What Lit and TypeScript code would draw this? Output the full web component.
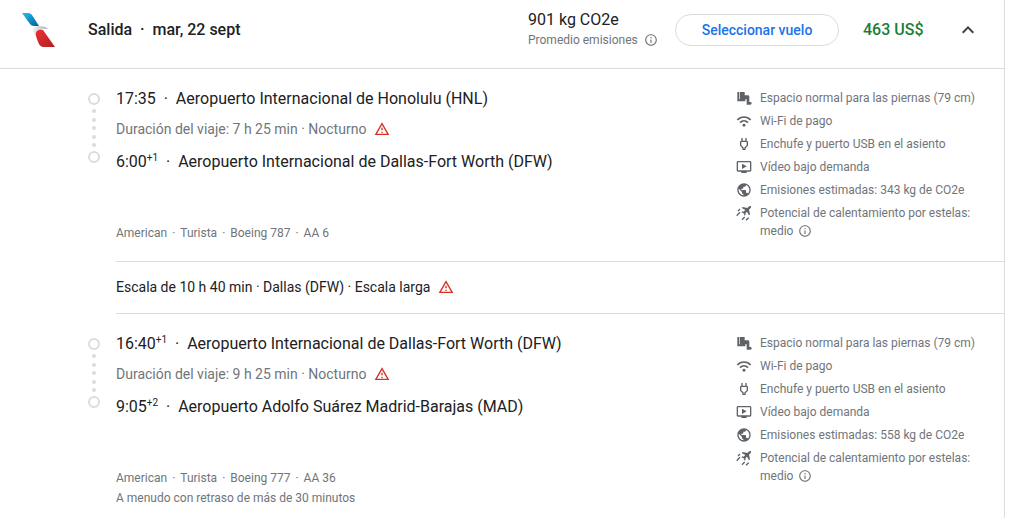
import { LitElement, html, css, svg } from "lit";
import { customElement, property } from "lit/decorators.js";

type IconName = "seat" | "wifi" | "plug" | "video" | "globe" | "contrail" | "info" | "warning" | "collapse";

const glyphs = {
  seat: svg`<path d="M2 3h3v11h9v3H2zM6 3h7v5h5c1.100 0 2 .9 2 2v8h1.500a1.500 1.500 0 0 1 0 4H16v-8H6z"/>`,
  wifi: svg`<g fill="none" stroke="currentColor" stroke-width="2.400"><path d="M2 10.500C7.500 4.500 16.500 4.500 22 10.500M6 14.500c3.500-3.500 8.500-3.500 12 0"/></g><circle cx="12" cy="18.500" r="2.200"/>`,
  plug: svg`<path d="M16 7V3h-2v4h-4V3H8v4c-1.100 0-2 .9-2 2v5.500L9.500 18v3h5v-3l3.500-3.500V9c0-1.100-.9-2-2-2zm0 6.700-3.500 3.500V19h-1v-1.800L8 13.700V9h8z"/>`,
  video: svg`<path d="M21 3H3c-1.100 0-2 .9-2 2v12c0 1.100.9 2 2 2h5v2h8v-2h5c1.100 0 2-.9 2-2V5c0-1.100-.9-2-2-2zm0 14H3V5h18v12zM9 7v8l7-4z"/>`,
  globe: svg`<path d="M12 2C6.480 2 2 6.480 2 12s4.480 10 10 10 10-4.480 10-10S17.520 2 12 2zm-1 17.930c-3.950-.49-7-3.850-7-7.930 0-.62.08-1.210.21-1.790L9 15v1c0 1.100.9 2 2 2v1.930zm6.900-2.540c-.26-.81-1-1.390-1.900-1.390h-1v-3c0-.55-.45-1-1-1H8v-2h2c.55 0 1-.45 1-1V7h2c1.100 0 2-.9 2-2v-.41c2.930 1.190 5 4.060 5 7.410 0 2.080-.8 3.970-2.100 5.390z"/>`,
  contrail: svg`<path d="M22.500 2c-1-1-2.500-.5-3.500.5L17 4.500 10 3 8.500 4.500l5.500 3-2.500 2.500-2-.5L8 11l3.500 1.500L13 16l1.500-1.500-.5-2 2.500-2.500 3 5.500 1.500-1.500-1.500-7 2-2c1-1 1.500-2 1-3z"/><path d="M3 9l3-3M1 16l5-5M9 22l4-4M15 23l4-4" fill="none" stroke="currentColor" stroke-width="2"/>`,
  info: svg`<path d="M11 17h2v-6h-2v6zm1-15C6.480 2 2 6.480 2 12s4.480 10 10 10 10-4.480 10-10S17.520 2 12 2zm0 18c-4.410 0-8-3.590-8-8s3.590-8 8-8 8 3.590 8 8-3.590 8-8 8zM11 9h2V7h-2v2z"/>`,
  warning: svg`<path d="M12 5.990 19.530 19H4.470L12 5.990M12 2 1 21h22L12 2zm1 14h-2v2h2v-2zm0-6h-2v4h2v-4z"/>`,
  collapse: svg`<path d="M12 8l-6 6 1.410 1.410L12 10.830l4.590 4.580L18 14z"/>`,
};

@customElement("flight-icon")
class FlightIcon extends LitElement {
  @property() name: IconName = "info";
  static styles = css`
    :host { display: inline-block; width: 16px; height: 16px; flex: none; }
    .glyph { display: block; width: 100%; height: 100%; fill: currentColor; }
  `;
  render() {
    return html`<svg class="glyph" viewBox="0 0 24 24" aria-hidden="true">${glyphs[this.name]}</svg>`;
  }
}

interface Stop { time: string; days?: string; airport: string; }
interface Leg { from: Stop; to: Stop; duration: string; aircraft: string[]; note?: string; co2: string; }

const legs: Leg[] = [
  {
    from: { time: "17:35", airport: "Aeropuerto Internacional de Honolulu (HNL)" },
    to: { time: "6:00", days: "+1", airport: "Aeropuerto Internacional de Dallas-Fort Worth (DFW)" },
    duration: "7 h 25 min",
    aircraft: ["American", "Turista", "Boeing 787", "AA 6"],
    co2: "343",
  },
  {
    from: { time: "16:40", days: "+1", airport: "Aeropuerto Internacional de Dallas-Fort Worth (DFW)" },
    to: { time: "9:05", days: "+2", airport: "Aeropuerto Adolfo Suárez Madrid-Barajas (MAD)" },
    duration: "9 h 25 min",
    aircraft: ["American", "Turista", "Boeing 777", "AA 36"],
    note: "A menudo con retraso de más de 30 minutos",
    co2: "558",
  },
];

@customElement("flight-leg")
class FlightLeg extends LitElement {
  @property({ attribute: false }) leg!: Leg;
  static styles = css`
    :host {
      display: grid;
      grid-template-columns: 28px minmax(0, 1fr) 268px;
      padding: 18px 0 20px 88px;
      color: #70757a;
      font-size: 12px;
      line-height: 16px;
    }
    .rail { display: flex; flex-direction: column; align-items: center; width: 12px; padding-top: 6px; }
    .ring { box-sizing: border-box; width: 12px; height: 12px; border: 2px solid #dadce0; border-radius: 50%; }
    .dots { display: flex; flex-direction: column; justify-content: space-between; height: 38px; margin: 4px 0; }
    .dot { width: 4px; height: 4px; border-radius: 50%; background: #dadce0; }
    .stop { display: flex; font-family: "Google Sans", Roboto, sans-serif; font-size: 16px; line-height: 24px; color: #202124; white-space: nowrap; }
    .days { font-size: 10px; line-height: 16px; }
    .sep { width: 20px; text-align: center; }
    .duration { display: flex; align-items: center; gap: 8px; margin: 8px 0 11px; font-size: 14px; line-height: 20px; }
    .warn { color: #d93025; }
    .plane { display: flex; flex-wrap: wrap; gap: 5px; margin: 51px 0 0; }
    .note { margin: 4px 0 0; }
    .amenities { display: grid; align-content: start; gap: 5px; margin: 0; padding: 2px 16px 0 0; list-style: none; line-height: 18px; }
    .amenity { display: flex; gap: 8px; }
    .amenity-icon { margin-top: 1px; color: #5f6368; }
    .info { width: 14px; height: 14px; margin-left: 2px; vertical-align: -3px; }
  `;
  stop(s: Stop) {
    return html`<div class="stop"><span>${s.time}</span>${s.days ? html`<span class="days">${s.days}</span>` : ""}<span class="sep">·</span><span>${s.airport}</span></div>`;
  }
  amenity(icon: IconName, text: unknown) {
    return html`<li class="amenity"><flight-icon class="amenity-icon" name=${icon}></flight-icon><span>${text}</span></li>`;
  }
  render() {
    const l = this.leg;
    return html`
      <div class="rail">
        <span class="ring"></span>
        <span class="dots">${[0, 1, 2, 3, 4].map(() => html`<span class="dot"></span>`)}</span>
        <span class="ring"></span>
      </div>
      <div>
        ${this.stop(l.from)}
        <div class="duration"><span>Duración del viaje: ${l.duration} · Nocturno</span><flight-icon class="warn" name="warning"></flight-icon></div>
        ${this.stop(l.to)}
        <p class="plane">${l.aircraft.map((a, i) => html`${i ? html`<span>·</span>` : ""}<span>${a}</span>`)}</p>
        ${l.note ? html`<p class="note">${l.note}</p>` : ""}
      </div>
      <ul class="amenities">
        ${this.amenity("seat", "Espacio normal para las piernas (79 cm)")}
        ${this.amenity("wifi", "Wi-Fi de pago")}
        ${this.amenity("plug", "Enchufe y puerto USB en el asiento")}
        ${this.amenity("video", "Vídeo bajo demanda")}
        ${this.amenity("globe", `Emisiones estimadas: ${l.co2} kg de CO2e`)}
        ${this.amenity("contrail", html`Potencial de calentamiento por estelas: medio <flight-icon class="info" name="info"></flight-icon>`)}
      </ul>
    `;
  }
}

@customElement("app-root")
class AppRoot extends LitElement {
  static styles = css`
    :host { display: block; background: #fff; font-family: Roboto, sans-serif; color: #202124; }
    .card { margin-right: 19px; border-right: 1px solid #dadce0; }
    .head {
      display: grid;
      grid-template-columns: 88px minmax(0, 1fr) 147px 188px 81px 48px;
      align-items: center;
      padding: 6px 12px 14px 0;
      font-family: "Google Sans", Roboto, sans-serif;
      border-bottom: 1px solid #dadce0;
    }
    .logo { width: 36px; height: 36px; margin-left: 21px; }
    .title { margin: 0; font-size: 16px; line-height: 24px; font-weight: 500; white-space: pre; }
    .total { font-size: 16px; line-height: 20px; }
    .average { display: flex; align-items: center; gap: 6px; font-family: Roboto, sans-serif; font-size: 12px; line-height: 20px; color: #70757a; }
    .info { width: 14px; height: 14px; }
    .select { justify-self: start; width: 164px; height: 32px; padding: 0; border: 1px solid #dadce0; border-radius: 16px; background: #fff; color: #1a73e8; font: 500 14px/20px "Google Sans", Roboto, sans-serif; }
    .price { font-size: 16px; line-height: 24px; font-weight: 500; color: #188038; }
    .toggle { display: grid; place-items: center; width: 48px; height: 48px; padding: 0; border: 0; background: none; color: #3c4043; }
    .chevron { width: 24px; height: 24px; }
    .layover { display: flex; align-items: center; gap: 8px; margin-left: 116px; padding: 15px 0 16px; border: 1px solid #dadce0; border-width: 1px 0; font-size: 14px; line-height: 20px; }
    .warn { color: #d93025; }
  `;
  render() {
    return html`
      <main class="card">
        <header class="head">
          <svg class="logo" viewBox="0 0 36 36" role="img" aria-label="American Airlines">
            <defs>
              <linearGradient id="blue" x1="0" y1="0" x2="1" y2="1"><stop offset="0" stop-color="#1fc3f3"/><stop offset="1" stop-color="#0a5a96"/></linearGradient>
              <linearGradient id="red" x1="0" y1="0" x2="1" y2="1"><stop offset="0" stop-color="#ee3030"/><stop offset="1" stop-color="#b01f26"/></linearGradient>
              <linearGradient id="grey" x1="0" y1="0" x2="1" y2="0"><stop offset="0" stop-color="#eef1f3"/><stop offset="1" stop-color="#a8b2b9"/></linearGradient>
            </defs>
            <path fill="url(#blue)" d="M1 1h6c2 0 3 1 4 2l7 11h-5c-2 0-3-1-4-2z"/>
            <path fill="url(#grey)" d="M12 20c-1-3 1-6 6-6 4 0 8 1 9 3-4-1-8 0-10 3l-2 4z"/>
            <path fill="url(#red)" d="M15 24c-1-5 2-7 7-6l12 17H23c-3 0-5-2-6-5z"/>
          </svg>
          <h1 class="title">Salida  ·  mar, 22 sept</h1>
          <div>
            <div class="total">901 kg CO2e</div>
            <div class="average"><span>Promedio emisiones</span><flight-icon class="info" name="info"></flight-icon></div>
          </div>
          <button class="select" type="button">Seleccionar vuelo</button>
          <span class="price">463 US$</span>
          <button class="toggle" type="button" aria-label="Ocultar detalles" aria-expanded="true"><flight-icon class="chevron" name="collapse"></flight-icon></button>
        </header>
        <flight-leg .leg=${legs[0]}></flight-leg>
        <div class="layover"><span>Escala de 10 h 40 min · Dallas (DFW) · Escala larga</span><flight-icon class="warn" name="warning"></flight-icon></div>
        <flight-leg .leg=${legs[1]}></flight-leg>
      </main>
    `;
  }
}
